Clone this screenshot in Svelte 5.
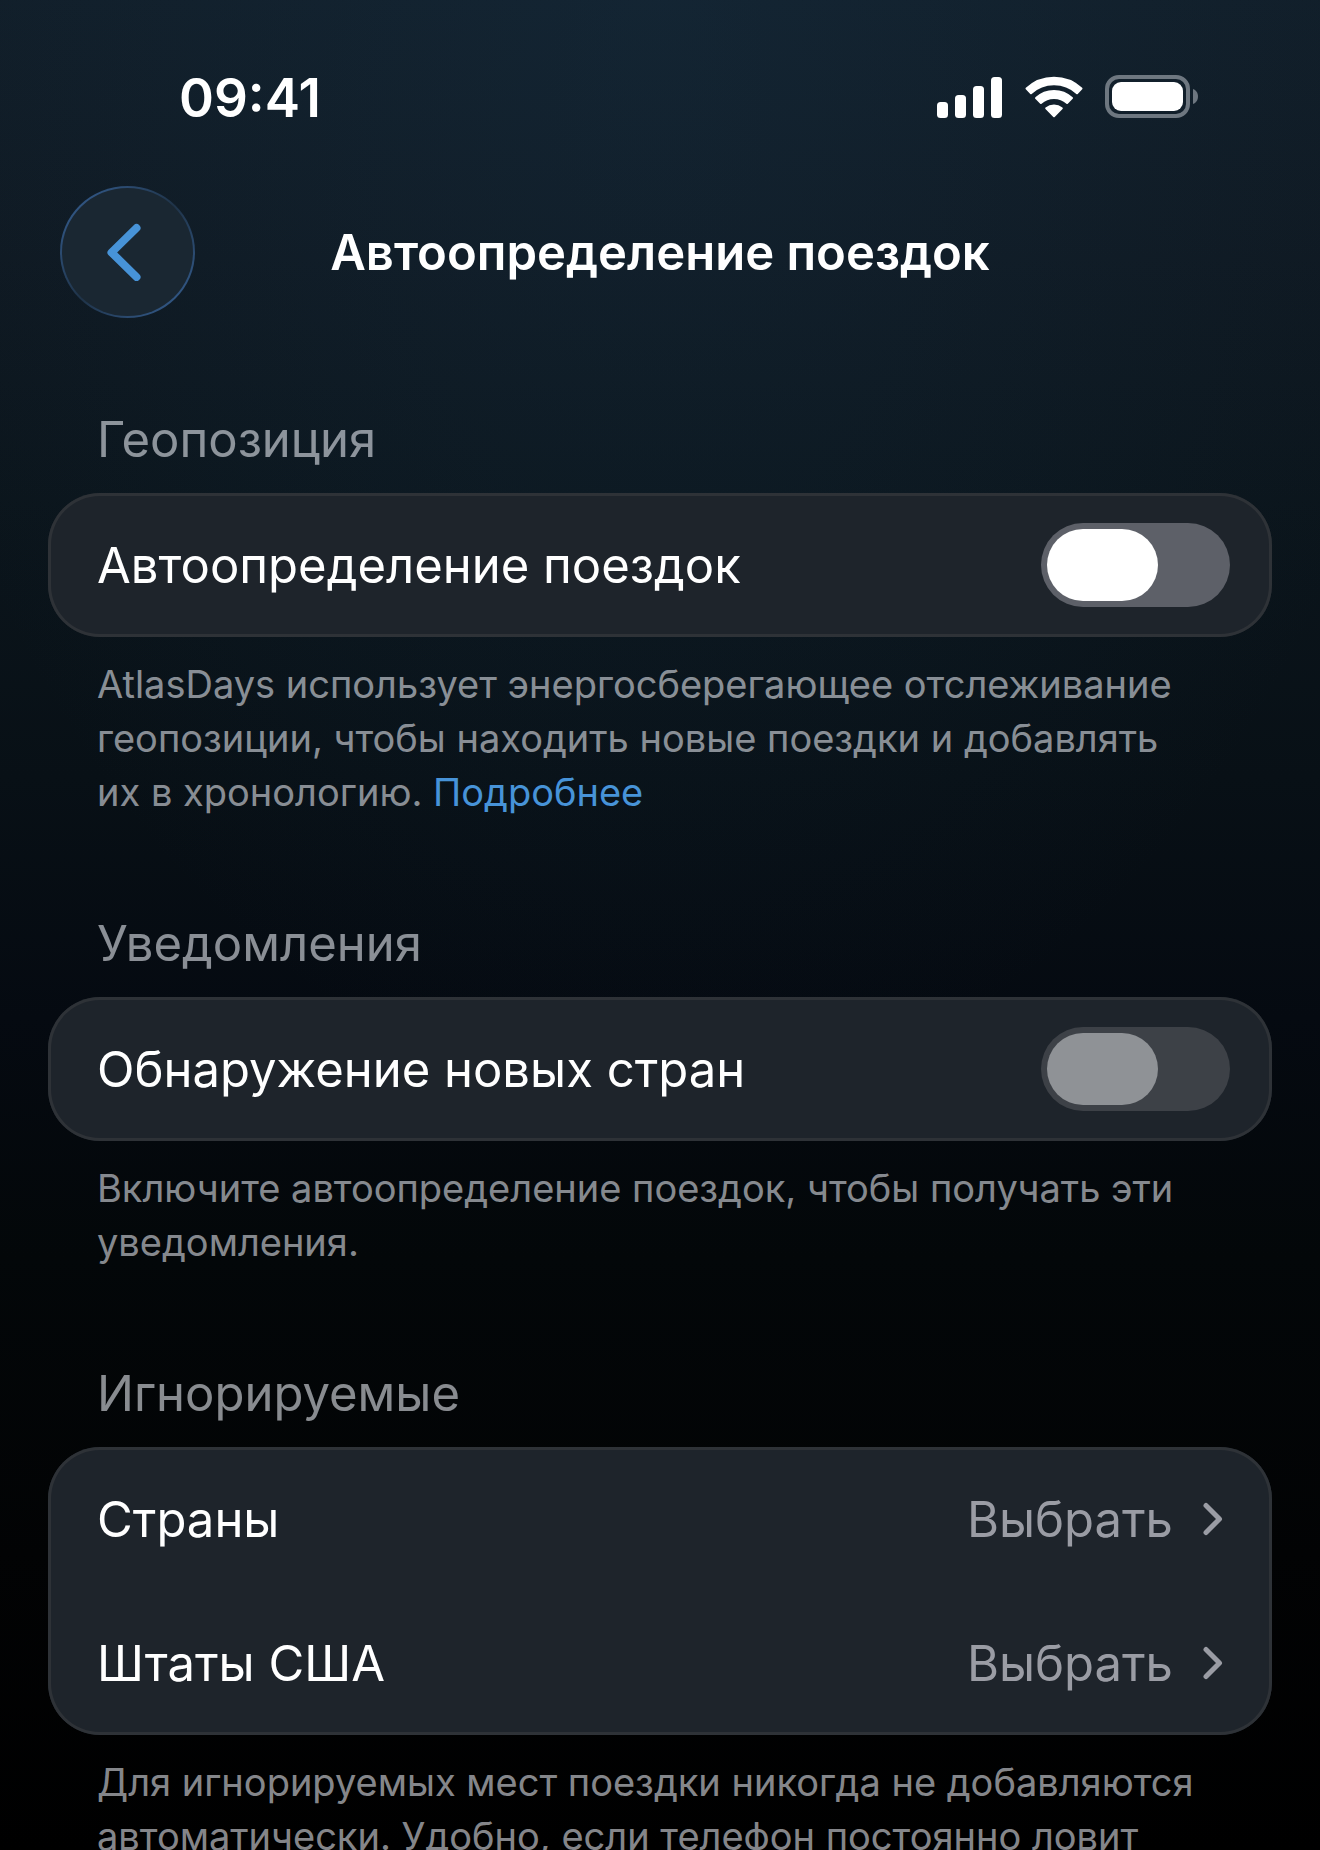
<script lang="ts">
  type Row = { label: string; kind: 'toggle' | 'link'; disabled?: boolean };
  type Section = { title: string; rows: Row[]; note: string; more?: string };

  const sections: Section[] = [
    {
      title: 'Геопозиция',
      rows: [{ label: 'Автоопределение поездок', kind: 'toggle' }],
      note: 'AtlasDays использует энергосберегающее отслеживание геопозиции, чтобы находить новые поездки и добавлять их в хронологию.',
      more: 'Подробнее',
    },
    {
      title: 'Уведомления',
      rows: [{ label: 'Обнаружение новых стран', kind: 'toggle', disabled: true }],
      note: 'Включите автоопределение поездок, чтобы получать эти уведомления.',
    },
    {
      title: 'Игнорируемые',
      rows: [
        { label: 'Страны', kind: 'link' },
        { label: 'Штаты США', kind: 'link' },
      ],
      note: 'Для игнорируемых мест поездки никогда не добавляются автоматически. Удобно, если телефон постоянно ловит',
    },
  ];
</script>

<div class="screen">
  <div class="status">
    <span class="status__time">09:41</span>
    <div class="status__icons">
      <svg width="66" height="42" viewBox="0 0 66 42" fill="#fff">
        <rect x="0" y="26" width="11" height="16" rx="3.500" />
        <rect x="18" y="19" width="11" height="23" rx="3.500" />
        <rect x="36" y="10" width="11" height="32" rx="3.500" />
        <rect x="54" y="1" width="11" height="41" rx="3.500" />
      </svg>
      <svg width="58" height="42" viewBox="0 0 58 42" fill="#fff" stroke="#fff" stroke-width="2" stroke-linejoin="round">
        <path d="M1.500 12.500A40.500 40.500 0 0 1 56.500 12.500L52 17.300A34 34 0 0 0 6 17.300Z" />
        <path d="M11 22.100A26.500 26.500 0 0 1 47 22.100L42.100 27A19.500 19.500 0 0 0 15.900 27Z" />
        <path d="M21.200 32.300A12 12 0 0 1 36.800 32.300L29 40.300Z" />
      </svg>
      <svg width="93" height="43" viewBox="0 0 93 43">
        <rect x="2" y="2" width="81" height="39" rx="12" fill="none" stroke="#6e7780" stroke-width="4" />
        <rect x="7" y="7" width="71" height="29" rx="9" fill="#fff" />
        <path d="M88 14c3 1 5 4 5 7.500s-2 6.500-5 7.500z" fill="#6e7780" />
      </svg>
    </div>
  </div>

  <header class="nav">
    <button class="nav__back" aria-label="Назад">
      <svg width="34" height="58" viewBox="0 0 34 58" fill="none" stroke="#4793d8" stroke-width="8" stroke-linecap="round" stroke-linejoin="round">
        <path d="M29.500 5 4.500 29.500l25 24.500" />
      </svg>
    </button>
    <h1>Автоопределение поездок</h1>
  </header>

  <main>
    {#each sections as section, s}
      <section>
        <h2>{section.title}</h2>
        <div class="card">
          {#each section.rows as row, r}
            {#if row.kind === 'toggle'}
              <div class="row">
                <label for="toggle-{s}-{r}">{row.label}</label>
                <input id="toggle-{s}-{r}" class="toggle" type="checkbox" role="switch" disabled={row.disabled} />
              </div>
            {:else}
              <button class="row">
                <span>{row.label}</span>
                <span class="row__value">
                  Выбрать
                  <svg width="20" height="34" viewBox="0 0 20 34" fill="none" stroke="#9a9ca4" stroke-width="5" stroke-linecap="round" stroke-linejoin="round">
                    <path d="M3 3.500 16.500 17 3 30.500" />
                  </svg>
                </span>
              </button>
            {/if}
          {/each}
        </div>
        <p>
          {section.note}
          {#if section.more}<a href="#more">{section.more}</a>{/if}
        </p>
      </section>
    {/each}
  </main>
</div>

<style>
  :global(body) {
    margin: 0;
    background: #000;
  }

  .screen {
    box-sizing: border-box;
    height: 100vh;
    overflow: hidden;
    padding: 64px 48px 0;
    background:
      radial-gradient(ellipse 60% 60% at 50% 0, rgba(28, 62, 88, 0.22), transparent),
      linear-gradient(#111e29 0%, #0f1922 14%, #0b151c 27%, #081016 42%, #050a11 55%, #030709 68%, #020304 84%, #000 100%);
    color: #fff;
    font-family: Inter, 'Noto Sans', sans-serif;
  }

  .status {
    display: flex;
    align-items: center;
    justify-content: space-between;
    height: 68px;
    padding: 0 74px 0 131px;
  }

  .status__time {
    font-size: 53px;
    font-weight: 600;
  }

  .status__icons {
    display: flex;
    gap: 22px;
    align-items: center;
    padding-bottom: 3px;
  }

  .nav {
    display: grid;
    grid-template-columns: 135px 1fr 135px;
    align-items: center;
    padding: 54px 12px 0;
  }

  .nav__back {
    display: flex;
    align-items: center;
    justify-content: center;
    width: 135px;
    height: 132px;
    padding: 0 8px 0 0;
    border: 2px solid transparent;
    border-radius: 50%;
    background:
      linear-gradient(#1a2732, #1a2732) padding-box,
      linear-gradient(135deg, #305480 15%, #1f3348 50%, #305480 85%) border-box;
  }

  h1 {
    margin: 0;
    padding-top: 2px;
    text-align: center;
    font-size: 49px;
    line-height: 60px;
    font-weight: 600;
  }

  h2 {
    margin: 0;
    padding: 0 49px;
    color: rgba(235, 238, 245, 0.58);
    font-size: 49px;
    line-height: 60px;
    font-weight: 400;
  }

  main {
    padding-top: 92px;
  }

  section {
    margin-bottom: 95px;
  }

  .card {
    margin-top: 23px;
    border-radius: 52px;
    background: #1e242b;
    box-shadow: inset 0 0 0 3px #2e3237;
  }

  .row {
    display: flex;
    align-items: center;
    justify-content: space-between;
    box-sizing: border-box;
    width: 100%;
    height: 144px;
    padding: 0 42px 0 49px;
    border: 0;
    background: none;
    color: #fff;
    font: inherit;
    font-size: 49px;
  }

  .row__value {
    display: flex;
    align-items: center;
    gap: 30px;
    padding-right: 7px;
    color: #9a9ca4;
  }

  .toggle {
    display: flex;
    align-items: center;
    box-sizing: border-box;
    appearance: none;
    width: 189px;
    height: 84px;
    margin: 0;
    padding: 6px;
    border-radius: 42px;
    background: #5d6068;
  }

  .toggle::before {
    content: '';
    width: 111px;
    height: 72px;
    border-radius: 36px;
    background: #fff;
  }

  .toggle:checked {
    justify-content: flex-end;
    background: #4793d8;
  }

  .toggle:disabled {
    background: #3d4147;
  }

  .toggle:disabled::before {
    background: #8f9296;
  }

  p {
    margin: 20px 0 0;
    padding: 0 70px 0 49px;
    color: rgba(235, 238, 245, 0.58);
    font-size: 38px;
    line-height: 54px;
  }

  a {
    color: #4793d8;
    text-decoration: none;
  }
</style>
